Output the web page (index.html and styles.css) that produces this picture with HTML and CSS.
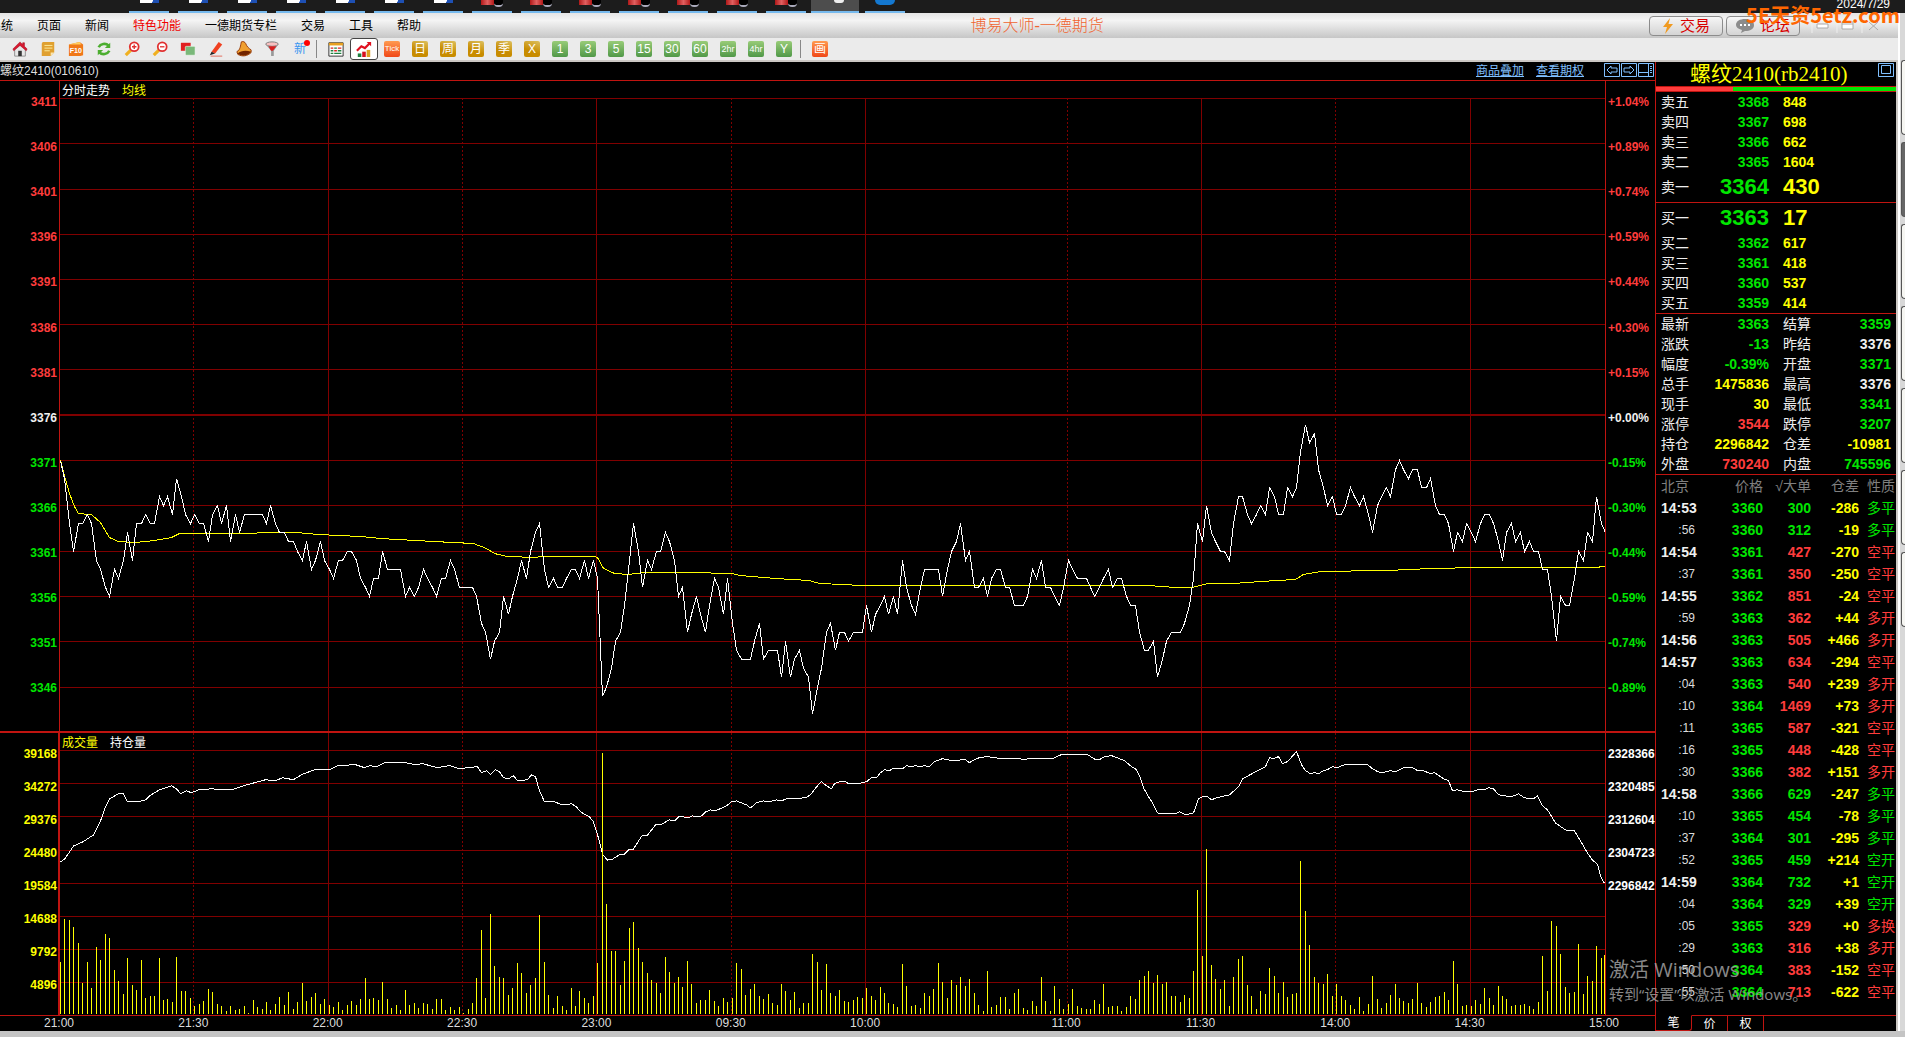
FILE: index.html
```html
<!DOCTYPE html>
<html lang="zh-CN">
<head>
<meta charset="utf-8">
<title>博易大师-一德期货</title>
<link rel="stylesheet" href="styles.css">
</head>
<body>
<div class="taskbar">
  <div class="tasks" id="tasks"></div>
  <time class="clock">2024/7/29</time>
</div>
<div class="window">
  <div class="app">
    <header class="menubar">
      <nav class="menu">
        <button>系统</button><button>页面</button><button>新闻</button><button class="hot">特色功能</button><button>一德期货专栏</button><button>交易</button><button>工具</button><button>帮助</button>
      </nav>
      <h1 class="app-title">博易大师-一德期货</h1>
      <div class="actions">
        <button class="action"><svg width="12" height="16" viewBox="0 0 12 16"><path d="M8 0L1 9h4L3 16 11 6H6.500z" fill="#f09a20"/></svg>交易</button>
        <button class="action"><svg width="18" height="14" viewBox="0 0 18 14"><path d="M9 0c5 0 9 2 9 6s-4 6-9 6l-4 2 1-3C2 10 0 8 0 6c0-4 4-6 9-6z" fill="#8c8c8c"/><path d="M4 5h2v2H4zM8 5h2v2H8zM12 5h2v2h-2z" fill="#fff"/></svg>论坛</button>
        <svg class="winctl" width="80" height="16" viewBox="0 0 80 16"><path d="M1 0v15M26 0v15M51 0v15" stroke="#eee"/><path d="M6 6h11v4H6zM31 4h11v7H31zM31 6h11M58 4l9 8M67 4l-9 8" fill="#fff" stroke="#aaa"/></svg>
      </div>
      <div class="brand">5E天资5etz.com</div>
    </header>
    <div class="toolbar" id="toolbar">
      <button aria-label="首页"><svg viewBox="0 0 18 18"><path d="M3 9v8h12V9L9 4z" fill="#e8e8e8" stroke="#888"/><path d="M9 1L1 9l1 2 7-6 7 6 1-2-3-3V2h-2v2z" fill="#d81830" stroke="#a01020" stroke-width=".6"/><path d="M7 11h4v6H7z" fill="#333"/></svg></button>
      <button aria-label="笔记"><svg viewBox="0 0 18 18"><path d="M3 1h13v12l-4 4H2V3z" fill="#e0a030"/><path d="M5 5h9M5 8h9M5 11h6" stroke="#fff0a0"/><path d="M12 17v-4h4" fill="#fbe7b0"/></svg></button>
      <button aria-label="F10"><svg viewBox="0 0 18 18"><path d="M1 4l12-3 4 3v12l-3 1H1z" fill="#f07818"/><path d="M1 4l12-3 2 3z" fill="#ffd060"/><text x="2" y="14" font-size="8" font-weight="700" fill="#fff">F10</text></svg></button>
      <button aria-label="刷新"><svg viewBox="0 0 18 18"><path d="M3 7c2-4 8-5 11-2M15 11c-2 4-8 5-11 2" fill="none" stroke="#4cae30" stroke-width="3"/><path d="M16 2v6h-6zM2 16v-6h6z" fill="#4cae30"/></svg></button>
      <button aria-label="放大"><svg viewBox="0 0 18 18"><path d="M2 16l6-6" stroke="#f0b020" stroke-width="3.500"/><circle cx="11.500" cy="6.500" r="5" fill="#fff" stroke="#e03030" stroke-width="2"/><path d="M9 6.500h5M11.500 4v5" stroke="#e03030" stroke-width="1.500"/></svg></button>
      <button aria-label="缩小"><svg viewBox="0 0 18 18"><path d="M2 16l6-6" stroke="#f0b020" stroke-width="3.500"/><circle cx="11.500" cy="6.500" r="5" fill="#fff" stroke="#e03030" stroke-width="2"/><path d="M9 6.500h5" stroke="#e03030" stroke-width="1.500"/></svg></button>
      <button aria-label="叠加"><svg viewBox="0 0 18 18"><path d="M1 2h11v9H1z" fill="#e02020"/><rect x="6" y="6" width="11" height="10" rx="1" fill="#7ab87a" stroke="#fff" stroke-width=".6"/></svg></button>
      <button aria-label="画笔"><svg viewBox="0 0 18 18"><path d="M4 12L12 1l4 3-8 10z" fill="#f04020"/><path d="M4 12l-2 4 6-2z" fill="#222"/><path d="M3 17h13" stroke="#e06050"/></svg></button>
      <button aria-label="预警"><svg viewBox="0 0 18 18"><path d="M6 1C8 0 10 1 11 3c1 3 3 5 6 7v3c-4 4-10 5-15 2l-1-3c4-2 4-7 5-11z" fill="#f0a030" stroke="#903000"/><path d="M2 14c3-3 9-4 15-2-3 4-10 6-15 2z" fill="#702400"/></svg></button>
      <button aria-label="筛选"><svg viewBox="0 0 18 18"><ellipse cx="9" cy="3.500" rx="7" ry="2.500" fill="#f8c0c0" stroke="#777"/><path d="M2 4l6 7v6h3v-6l5-7c-3 2-10 2-14 0z" fill="#999"/><path d="M5 6h9l-4 5H8z" fill="#d82020"/></svg></button>
      <button class="fresh">新<i></i></button>
      <span class="sep"></span>
      <button aria-label="报价"><svg viewBox="0 0 18 18"><path d="M1 2h16v15H1z" fill="#fff" stroke="#222"/><path d="M1 2h16v3H1z" fill="#e8a020"/><path d="M3 8h3M11 8h4M7 11h3" stroke="#e02020" stroke-width="1.500"/><path d="M7 8h3M3 11h3M11 11h4M3 14h3M7 14h8" stroke="#208040" stroke-width="1.500"/></svg></button>
      <button class="on" aria-label="分时"><svg viewBox="0 0 18 18"><path d="M1 11l5-5 4 2 6-6" fill="none" stroke="#e01020" stroke-width="2.500"/><path d="M12 1h5v5z" fill="#e01020"/><path d="M2 14h4v4H2z" fill="#208040"/><path d="M7 12h4v6H7z" fill="#d81020"/><path d="M12 10h4v8h-4z" fill="#e0a020"/></svg></button>
      <button><span class="badge tick">Tick</span></button>
      <button><span class="badge gold">日</span></button><button><span class="badge gold">周</span></button><button><span class="badge gold">月</span></button><button><span class="badge gold">季</span></button><button><span class="badge gold">X</span></button>
      <button><span class="badge">1</span></button><button><span class="badge">3</span></button><button><span class="badge">5</span></button><button><span class="badge">15</span></button><button><span class="badge">30</span></button><button><span class="badge">60</span></button><button><span class="badge small">2hr</span></button><button><span class="badge small">4hr</span></button><button><span class="badge">Y</span></button>
      <span class="sep"></span>
      <button><span class="badge tick">画</span></button>
    </div>
    <main class="work">
      <section class="charts">
        <div class="chart-head">
          <span>螺纹2410(010610)</span>
          <span class="links">
            <a href="#">商品叠加</a><a href="#">查看期权</a>
            <span class="nav-icons">
              <button aria-label="上一个"><svg viewBox="0 0 16 14"><path d="M.5.500h15v13H.5zM3 7l4-4v2h6v4H7v2z"/></svg></button>
              <button aria-label="下一个"><svg viewBox="0 0 16 14"><path d="M.5.500h15v13H.5zM13 7L9 3v2H3v4h6v2z"/></svg></button>
              <button aria-label="布局"><svg viewBox="0 0 16 14"><path d="M.5.500h15v13H.5zM.5 9.500h10M10.500.500v13M12 3.500h2M12 5.500h2M12 7.500h2M12 9.500h2"/></svg></button>
            </span>
          </span>
        </div>
        <div class="panel price">
          <div class="axis left" id="price-axis"></div>
          <div class="plot"><svg id="price" viewBox="0 0 1545 651" preserveAspectRatio="none"></svg>
            <div class="legend"><span>分时走势</span><span class="yellow">均线</span></div></div>
          <div class="axis right" id="pct-axis"></div>
        </div>
        <div class="panel volume">
          <div class="axis left" id="vol-axis"></div>
          <div class="plot"><svg id="volume" viewBox="0 0 1545 281" preserveAspectRatio="none"></svg>
            <div class="legend"><span class="yellow">成交量</span><span>持仓量</span></div></div>
          <div class="axis right" id="oi-axis"></div>
        </div>
        <div class="times" id="times"></div>
      </section>
      <aside class="side">
        <div class="side-title"><h2>螺纹2410(rb2410)</h2><button aria-label="最大化"><svg viewBox="0 0 16 14"><path d="M.5.500h15v13H.5zM3.500 2.500h9v8h-9z"/></svg></button></div>
        <div class="ratio"><span></span></div>
        <dl class="depth" id="asks"></dl>
        <dl class="depth" id="bids"></dl>
        <dl class="stats" id="stats"></dl>
        <table class="ticks">
          <colgroup><col class="c-time"><col class="c-price"><col class="c-vol"><col class="c-vol"><col class="c-kind"></colgroup>
          <thead><tr><th>北京</th><th>价格</th><th>√大单</th><th>仓差</th><th>性质</th></tr></thead>
          <tbody id="ticks"></tbody>
        </table>
        <div class="tabs"><button class="active">笔</button><button>价</button><button>权</button><span></span></div>
      </aside>
    </main>
  </div>
  <div class="edge">
    <span></span><span class="dark"></span><span></span><span></span><span></span><span></span><span></span>
  </div>
</div>
<div class="statusbar"></div>
<div class="activate"><p class="big">激活 Windows</p><p>转到“设置”以激活 Windows。</p></div>
<script src="chart.js"></script>
</body>
</html>
```
FILE: styles.css
```css
* { box-sizing: border-box; }
body {
  margin: 0;
  height: 100vh;
  display: flex;
  flex-direction: column;
  overflow: hidden;
  background: #000;
  color: #fff;
  font: 12px/16px "Liberation Sans", "Noto Sans CJK SC", sans-serif;
  --line: #c01410;
  --grid: #800000;
  --red: #ff3c3c;
  --green: #00e600;
  --yellow: #ffff00;
  --blue: #80c0ff;
}
button { margin: 0; padding: 0; border: 0; background: none; color: inherit; font: inherit; }
h1, h2, p, dl, dd { margin: 0; font-weight: 400; }

.taskbar { height: 13px; flex: none; background: #1c1c1c; display: flex; justify-content: space-between; overflow: hidden; padding: 0 15px 0 129px; }
.tasks { display: flex; gap: 9px; }
.tasks span { width: 40px; height: 13px; border-bottom: 2px solid #76b9ed; display: flex; justify-content: center; }
.tasks .doc::before { content: ""; width: 19px; height: 3px; background: linear-gradient(100deg, #fff 65%, #1e50b4 66%); }
.tasks .quote::before { content: ""; width: 13px; height: 5px; background: linear-gradient(90deg, #b01818, #e06060, #b01818); }
.tasks .quote::after { content: ""; width: 9px; height: 5px; background: #000; border-bottom: 2px solid #aab; border-radius: 0 0 4px 4px; }
.tasks .current { width: 48px; margin: 0 -4px; background: #4d4d4d; }
.tasks .current::before { content: ""; width: 10px; height: 3px; background: #eee; margin-left: 8px; border-radius: 0 0 4px 4px; }
.tasks .globe { margin-left: 1px; }
.tasks .globe::before { content: ""; width: 20px; height: 5px; background: #1478d0; border-radius: 0 0 10px 10px; }
.clock { line-height: 8px; font-size: 12px; color: #fff; }

.window { flex: 1; display: flex; min-height: 0; }
.app { flex: 1; min-width: 0; display: flex; flex-direction: column; }
.menubar { position: relative; height: 25px; flex: none; display: flex; align-items: center; background: linear-gradient(#e4e4e4, #f4f4f4 30%, #c6c6c6); color: #000; }
.menu { display: flex; gap: 24px; margin-left: -11px; }
.hot { color: #f00000; }
.app-title { flex: 1; padding-left: 4px; text-align: center; font: 16px/20px "Liberation Serif", "Noto Sans CJK SC", serif; font-weight: 300; color: #f06430; }
.actions { display: flex; align-items: center; gap: 3px; padding-right: 7px; }
.action { width: 74px; height: 20px; border: 1px solid #8c8c8c; border-radius: 4px; background: linear-gradient(#f6f6f6, #d4d4d4); display: flex; align-items: center; justify-content: center; gap: 6px; color: #d80000; font-size: 15px; }
.winctl { margin-left: 8px; }
.brand { position: absolute; right: -2px; top: -12px; font: 700 20px/28px "Noto Sans CJK SC", sans-serif; color: #ff6600; white-space: nowrap; z-index: 2; }

.toolbar { height: 24px; flex: none; display: flex; align-items: center; padding-left: 6px; background: #ebebeb; border-bottom: 2px solid #ccc8c4; }
.toolbar button { width: 28px; height: 22px; display: flex; align-items: center; justify-content: center; }
.toolbar svg { width: 16px; height: 16px; }
.toolbar .on { border: 1px solid #444; border-radius: 3px; background: #fff; }
.sep { width: 8px; height: 18px; background: linear-gradient(#888, #888) 2px 0 / 1px 100% no-repeat; }
.fresh { position: relative; color: #3c96f0; }
.fresh i { position: absolute; right: 4px; top: 2px; width: 6px; height: 6px; border-radius: 50%; background: #f00; }
.badge { width: 16px; height: 16px; border-radius: 2px; background: linear-gradient(#98cc78, #509848); color: #fff; font-size: 12px; line-height: 16px; text-align: center; }
.gold { background: linear-gradient(20deg, #c88c00 40%, #dcc060); }
.tick { background: linear-gradient(#ff9a50, #f04818); font-size: 8px; }
.small { font-size: 9px; }
.toolbar button:last-child .badge { font-size: 12px; }

.work { flex: 1; display: flex; min-height: 0; border-right: 2px solid #ccc8c4; }
.charts { flex: 1; min-width: 0; display: flex; flex-direction: column; }
.chart-head { height: 19px; flex: none; border-bottom: 1px solid var(--line); display: flex; justify-content: space-between; line-height: 18px; color: #ddd; }
.links { display: flex; gap: 12px; }
.links a { color: var(--blue); }
.nav-icons { display: flex; gap: 1px; margin: 1px 1px 0 8px; height: 14px; }
.nav-icons svg, .side-title svg { width: 16px; height: 14px; display: block; fill: none; stroke: var(--blue); }

.panel { display: flex; min-height: 0; }
.price { flex: 651 0 0px; }
.volume { flex: 283 0 0px; border-top: 2px solid var(--line); }
.plot { position: relative; flex: 1; min-width: 0; }
.plot svg { position: absolute; inset: 0; width: 100%; height: 100%; shape-rendering: crispEdges; }
.plot path, .plot polyline { fill: none; stroke: var(--grid); vector-effect: non-scaling-stroke; }
.plot .half { stroke-dasharray: 2 2; }
.plot .zero { stroke-width: 2; }
.plot .white { stroke: #fff; }
.plot .gold-line { stroke: var(--yellow); }
.legend { position: absolute; left: 2px; top: 2px; display: flex; gap: 12px; }
.yellow { color: var(--yellow); }
.axis { flex: none; display: grid; grid-auto-rows: 1fr; padding-top: 18px; font-weight: 700; line-height: 14px; }
.axis span { margin-top: -4px; min-height: 0; height: 14px; }
.left { width: 60px; border-right: 1px solid var(--line); padding-right: 2px; text-align: right; }
.right { width: 50px; border-left: 1px solid var(--line); padding-left: 2px; white-space: nowrap; }
.volume .left { border-right-width: 2px; padding-right: 1px; color: var(--yellow); }
.up { color: var(--red); }
.down { color: var(--green); }
.times { height: 16px; flex: none; border-top: 1px solid var(--line); display: flex; padding: 0 50px 0 60px; line-height: 15px; color: #ddd; white-space: nowrap; }
.times span { min-width: 0; text-indent: -16px; }

.side { width: 241px; flex: none; border-left: 1px solid var(--line); display: flex; flex-direction: column; font-size: 14px; line-height: 20px; }
.side-title { height: 24px; display: flex; padding: 1px 2px 0 24px; }
.side-title h2 { flex: 1; margin-left: 10px; font: 21px/22px "Liberation Serif", "Noto Sans CJK SC", serif; color: var(--yellow); }
.side-title button { height: 14px; }
.ratio { height: 6px; border: 1px solid var(--line); border-width: 1px 0; background: #00e600; }
.ratio span { display: block; width: 32%; height: 4px; background: #ff3c3c; }
.depth, .stats { border-bottom: 1px solid var(--line); color: #eee; }
.depth div { display: grid; grid-template-columns: 50px 58px 1fr; padding-left: 5px; height: 20px; align-items: center; }
.depth dd, .stats dd { text-align: right; font-weight: 700; }
.depth dd:last-child { text-align: left; padding-left: 14px; }
.depth .best { height: 30px; }
.best dd { font-size: 22px; }
.stats { display: grid; grid-template-columns: 108px 1fr; padding: 0 5px; column-gap: 14px; }
.stats div { display: flex; justify-content: space-between; height: 20px; }
.w { color: #f0f0f0; }
.ticks { border-collapse: collapse; table-layout: fixed; width: 100%; }
.c-time { width: 42px; }
.c-price { width: 65px; }
.c-vol { width: 48px; }
.ticks th, .ticks td { height: 22px; padding: 0; text-align: right; line-height: 20px; white-space: nowrap; }
.ticks th { font-weight: 400; color: #808080; }
.ticks td { font-weight: 700; }
.ticks th:first-child, .ticks .minute { text-align: left; padding-left: 5px; }
.ticks .minute { color: #f0f0f0; }
.ticks .second { font-weight: 400; font-size: 12px; padding-right: 3px; color: #ddd; }
.ticks td:last-child { font-weight: 400; }
.ticks th:last-child, .ticks td:last-child { padding-right: 1px; }
.tabs { margin-top: auto; height: 16px; display: flex; font-size: 12px; line-height: 14px; }
.tabs button { width: 36px; border-top: 1px solid var(--line); border-right: 1px solid var(--line); }
.tabs .active { border-top-color: transparent; border-bottom: 1px solid var(--line); border-radius: 0 0 3px 0; }
.tabs span { flex: 1; border-top: 1px solid var(--line); }

.edge { width: 7px; flex: none; border-left: 2px solid #fff; background: #d8d8d8; padding: 47px 0 0 1px; display: flex; flex-direction: column; gap: 7px; }
.edge span { height: 75px; flex: none; background: #f6f6f2; border: 1px solid #555; border-right: 0; border-radius: 3px 0 0 4px; }
.edge .dark { background: #666; }
.statusbar { height: 6px; flex: none; background: #c4c4c4; }
.activate { position: absolute; right: 102px; bottom: 33px; width: 194px; color: #a0a0a0; opacity: .85; font: 15px/20px "Open Sans", "Noto Sans CJK SC", sans-serif; white-space: nowrap; pointer-events: none; }
.activate .big { font-size: 20px; line-height: 28px; }
```
FILE: chart.js
```js
const $ = id => document.getElementById(id);
const MINUTES = 345;
const STEP = 1545 / MINUTES;
const nums = s => s.trim().split(/\s+/).map(Number);

// Last price for every minute, as an offset from 3300.
const price = nums(`
71 69 64 61 64 64 65 64 60 59 57 56 59 58 60 63 60 64 64 65 64 64 67 66 67 65 69 67 65 64
65 64 64 62 65 66 64 66 62 65 63 65 65 65 65 65 64 66 64 63 63 62 62 61 60 62 59 60 62 60
59 58 60 60 61 61 60 58 57 56 58 58 61 59 59 59 59 56 57 56 57 59 58 57 56 58 58 60 59 57
57 57 57 56 53 52 49 51 52 56 54 56 58 60 58 61 63 64 59 57 58 57 57 58 59 59 58 60 58 60
58 45 46 48 51 52 55 60 64 61 57 60 59 61 61 63 62 60 56 57 52 54 56 54 52 55 58 57 54 58
53 50 49 49 49 51 53 49 50 50 50 47 51 47 49 50 48 47 43 46 48 52 53 50 52 52 51 52 52 52
55 52 54 55 56 54 56 54 60 57 55 54 57 59 59 59 59 56 59 61 62 64 60 61 57 57 58 56 58 59
59 57 57 55 55 55 56 59 58 60 57 57 56 55 57 60 59 58 58 58 57 56 57 58 59 57 58 58 56 55
55 52 50 50 51 47 49 51 52 52 52 53 55 58 64 62 66 63 62 61 61 60 64 67 67 65 64 65 66 65
68 67 65 65 68 67 68 72 75 73 74 70 68 66 67 65 65 66 68 67 66 67 65 63 66 67 68 67 70 71
70 69 70 70 68 68 69 66 65 65 64 61 63 62 64 63 62 64 65 65 64 62 60 63 64 62 63 61 62 61
61 59 59 56 51 56 55 55 58 61 60 63 62 67 64 63`);

const volume = nums(`
52 95 94 87 71 31 52 26 67 54 80 76 44 33 20 56 29 24 54 16 18 18 56 14 15 12 57 23 23 16
8 10 13 25 22 10 8 3 8 4 5 8 1 14 7 5 12 4 10 17 9 22 5 12 31 13 17 21 10 15
9 7 12 4 9 13 9 15 36 15 16 14 32 15 6 9 4 24 9 11 6 11 10 5 15 15 4 7 4 7
1 5 11 36 84 16 100 48 37 36 19 26 51 41 21 29 36 99 52 19 6 18 8 4 26 8 23 16 11 18
51 260 110 63 63 29 53 86 92 66 52 41 34 31 21 57 42 31 37 27 53 30 11 14 14 24 13 8 16 12
16 51 45 19 25 30 18 15 20 11 9 30 23 14 22 6 11 11 60 52 24 50 21 18 24 13 12 14 17 16
26 18 14 27 21 11 10 7 50 28 8 9 6 21 18 25 51 32 16 34 29 37 28 35 21 9 3 43 7 9
17 17 5 21 25 6 4 13 8 37 13 3 28 15 5 10 25 8 6 5 5 14 10 30 7 8 8 3 7 18
15 34 38 43 31 39 30 32 18 18 12 19 16 43 124 58 165 49 35 25 34 8 37 55 58 29 18 5 23 20
46 38 21 32 17 20 21 153 103 69 37 31 30 40 18 30 18 14 9 5 17 3 10 38 15 6 11 19 30 16
13 11 15 31 11 7 12 17 18 22 14 53 30 8 9 8 14 10 26 16 9 28 18 15 8 9 9 10 8 5
12 58 23 93 88 60 27 21 22 70 20 38 33 68 56 59`);

// Turning points of the average price and of open interest, in screen units.
const average = nums(`60 460 65 480 69 494 74 507 78 514 91 515 100 523 109 538 118 542 135 543 154 541 171 538 179 534
212 534 296 533 318 535 361 537 380 539 433 542 473 544 486 549 494 554 506 557 535 558 540 557 594 557 597 558 603 569
614 574 628 575 646 573 685 573 731 574 739 576 774 579 808 581 819 584 860 586 953 586 1146 586 1174 588 1192 588
1208 584 1234 584 1261 582 1295 580 1303 575 1321 572 1388 571 1431 569 1483 568 1554 568 1594 568 1605 567`);
const interest = nums(`60 862 64 859 69 852 73 846 82 842 93 835 100 821 105 807 109 799 118 794 123 794 127 802 137 802 145 800
149 796 159 790 171 786 176 789 180 794 186 791 191 793 198 790 212 789 217 790 231 790 243 786 265 780 275 781 282 778
293 780 301 775 314 770 329 770 337 766 355 765 364 768 369 766 376 767 384 763 405 763 414 765 422 764 437 768 449 766
459 769 477 767 481 773 486 771 490 775 495 770 499 772 503 778 508 779 513 776 517 781 527 780 531 775 535 777 539 791
544 802 554 802 562 805 571 804 576 807 580 812 589 817 593 822 598 838 602 854 607 860 612 859 620 854 624 854 629 849
633 849 638 841 642 835 647 835 655 825 660 825 665 822 669 820 674 821 678 817 683 817 687 818 692 816 696 817 701 816
705 812 710 810 715 811 726 806 731 802 736 801 741 803 746 805 750 808 756 803 763 801 768 802 776 800 781 801 786 799
805 798 810 795 817 786 821 782 826 786 831 789 834 784 839 782 845 782 848 784 858 784 866 782 871 778 876 778 880 773
884 770 889 771 892 769 902 769 906 766 911 767 915 766 920 767 924 766 929 767 934 762 942 759 951 761 965 760 969 763
974 760 979 758 987 757 1001 759 1019 759 1023 760 1028 759 1052 759 1061 755 1087 755 1095 760 1099 760 1104 757
1111 756 1124 761 1131 767 1135 769 1139 776 1143 788 1148 797 1152 803 1157 813 1161 814 1174 814 1179 812 1185 815
1193 813 1198 799 1202 797 1207 797 1211 800 1216 798 1229 795 1238 787 1242 779 1265 767 1269 758 1273 759 1278 757
1282 764 1287 762 1296 752 1301 765 1305 771 1310 774 1314 773 1318 774 1323 771 1327 770 1332 767 1337 768 1344 765
1367 765 1372 769 1377 772 1381 773 1390 771 1395 772 1403 768 1412 768 1417 771 1423 771 1430 774 1434 773 1443 779
1448 781 1452 791 1457 790 1465 792 1471 792 1477 790 1484 790 1488 788 1493 789 1498 795 1511 797 1518 794 1524 798
1533 799 1537 796 1542 806 1547 810 1555 823 1565 830 1574 831 1580 841 1587 853 1592 860 1597 864 1600 876 1604 883`);

const priceY = p => Math.round(17 + (3411 - p) * 9.07) + 0.5;
const at = i => Math.round(i * STEP) + 0.5;
const shift = (list, origin) => {
  const out = [];
  for (let i = 0; i < list.length; i += 2) out.push(`${list[i] - 60 + 0.5},${list[i + 1] - origin + 0.5}`);
  return out.join(' ');
};
const verticals = (from, to) => [[30, 1], [60], [90, 1], [120], [150, 1], [180], [225, 1], [255], [285, 1], [315]]
  .map(([m, half]) => `<path${half ? ' class="half"' : ''} d="M${at(m) - 1} ${from}V${to}"/>`).join('');

let upper = verticals(17, 651);
for (let p = 3411; p >= 3346; p -= 5) {
  upper += `<path${p === 3376 ? ' class="zero"' : ''} d="M0 ${p === 3376 ? priceY(p) + 0.5 : priceY(p)}H1545"/>`;
}
upper += `<polyline class="gold-line" points="${shift(average, 81)}"/>`;
upper += `<polyline class="white" points="${price.map((p, i) => at(i) + ',' + priceY(3300 + p)).join(' ')}"/>`;
$('price').innerHTML = upper;

let lower = verticals(0, 281);
for (let k = 0; k < 8; k++) lower += `<path d="M0 ${17.5 + 33 * k}H1545"/>`;
lower += `<polyline class="white" points="${shift(interest, 734)}"/>`;
lower += `<path class="gold-line" d="${volume.map((v, i) => `M${Math.min(at(i), 1544.5)} 280v${-v}`).join('')}"/>`;
$('volume').innerHTML = lower;

const levels = Array.from({ length: 14 }, (_, k) => 3411 - 5 * k);
const tone = p => p > 3376 ? 'up' : p < 3376 ? 'down' : 'w';
const pct = ['+1.04', '+0.89', '+0.74', '+0.59', '+0.44', '+0.30', '+0.15', '+0.00', '-0.15', '-0.30', '-0.44', '-0.59', '-0.74', '-0.89'];
$('price-axis').innerHTML = levels.map(p => `<span class="${tone(p)}">${p}</span>`).join('');
$('pct-axis').innerHTML = levels.map((p, k) => `<span class="${tone(p)}">${pct[k]}%</span>`).join('');
$('vol-axis').innerHTML = [8, 7, 6, 5, 4, 3, 2, 1].map(k => `<span>${4896 * k}</span>`).join('');
$('oi-axis').innerHTML = [2328366, 2320485, 2312604, 2304723, 2296842, '', '', ''].map(v => `<span>${v}</span>`).join('');
$('times').innerHTML = [['21:00', 30], ['21:30', 30], ['22:00', 30], ['22:30', 30], ['23:00', 30], ['09:30', 30], ['10:00', 45],
  ['11:00', 30], ['11:30', 30], ['14:00', 30], ['14:30', 30], ['15:00', 0]]
  .map(([t, w]) => `<span style="flex:${w} 0 0px">${t}</span>`).join('');

const depth = rows => rows.map(([n, p, v]) =>
  `<div${n.endsWith('一') ? ' class="best"' : ''}><dt>${n}</dt><dd class="down">${p}</dd><dd class="yellow">${v}</dd></div>`).join('');
$('asks').innerHTML = depth([['卖五', 3368, 848], ['卖四', 3367, 698], ['卖三', 3366, 662], ['卖二', 3365, 1604], ['卖一', 3364, 430]]);
$('bids').innerHTML = depth([['买一', 3363, 17], ['买二', 3362, 617], ['买三', 3361, 418], ['买四', 3360, 537], ['买五', 3359, 414]]);
$('stats').innerHTML = [
  ['最新', '3363', 'down'], ['结算', '3359', 'down'], ['涨跌', '-13', 'down'], ['昨结', '3376', 'w'],
  ['幅度', '-0.39%', 'down'], ['开盘', '3371', 'down'], ['总手', '1475836', 'yellow'], ['最高', '3376', 'w'],
  ['现手', '30', 'yellow'], ['最低', '3341', 'down'], ['涨停', '3544', 'up'], ['跌停', '3207', 'down'],
  ['持仓', '2296842', 'yellow'], ['仓差', '-10981', 'yellow'], ['外盘', '730240', 'up'], ['内盘', '745596', 'down']
].map(([n, v, c]) => `<div><dt>${n}</dt><dd class="${c}">${v}</dd></div>`).join('');

$('ticks').innerHTML = `14:53 3360 300 -286 多平 d
:56 3360 312 -19 多平 d
14:54 3361 427 -270 空平 u
:37 3361 350 -250 空平 u
14:55 3362 851 -24 空平 u
:59 3363 362 +44 多开 u
14:56 3363 505 +466 多开 u
14:57 3363 634 -294 空平 u
:04 3363 540 +239 多开 u
:10 3364 1469 +73 多开 u
:11 3365 587 -321 空平 u
:16 3365 448 -428 空平 u
:30 3366 382 +151 多开 u
14:58 3366 629 -247 多平 d
:10 3365 454 -78 多平 d
:37 3364 301 -295 多平 d
:52 3365 459 +214 空开 d
14:59 3364 732 +1 空开 d
:04 3364 329 +39 空开 d
:05 3365 329 +0 多换 u
:29 3363 316 +38 多开 u
:50 3364 383 -152 空平 u
:55 3364 713 -622 空平 u`.split('\n').map(line => {
  const [t, p, v, d, kind, side] = line.split(' ');
  const c = side === 'u' ? 'up' : 'down';
  return `<tr><td class="${t[0] === ':' ? 'second' : 'minute'}">${t}</td><td class="down">${p}</td><td class="${c}">${v}</td><td class="yellow">${d}</td><td class="${c}">${kind}</td></tr>`;
}).join('');

$('tasks').innerHTML = '<span class="doc"></span>'.repeat(7) + '<span class="quote"></span>'.repeat(7) +
  '<span class="current"></span><span class="globe"></span>';
```
